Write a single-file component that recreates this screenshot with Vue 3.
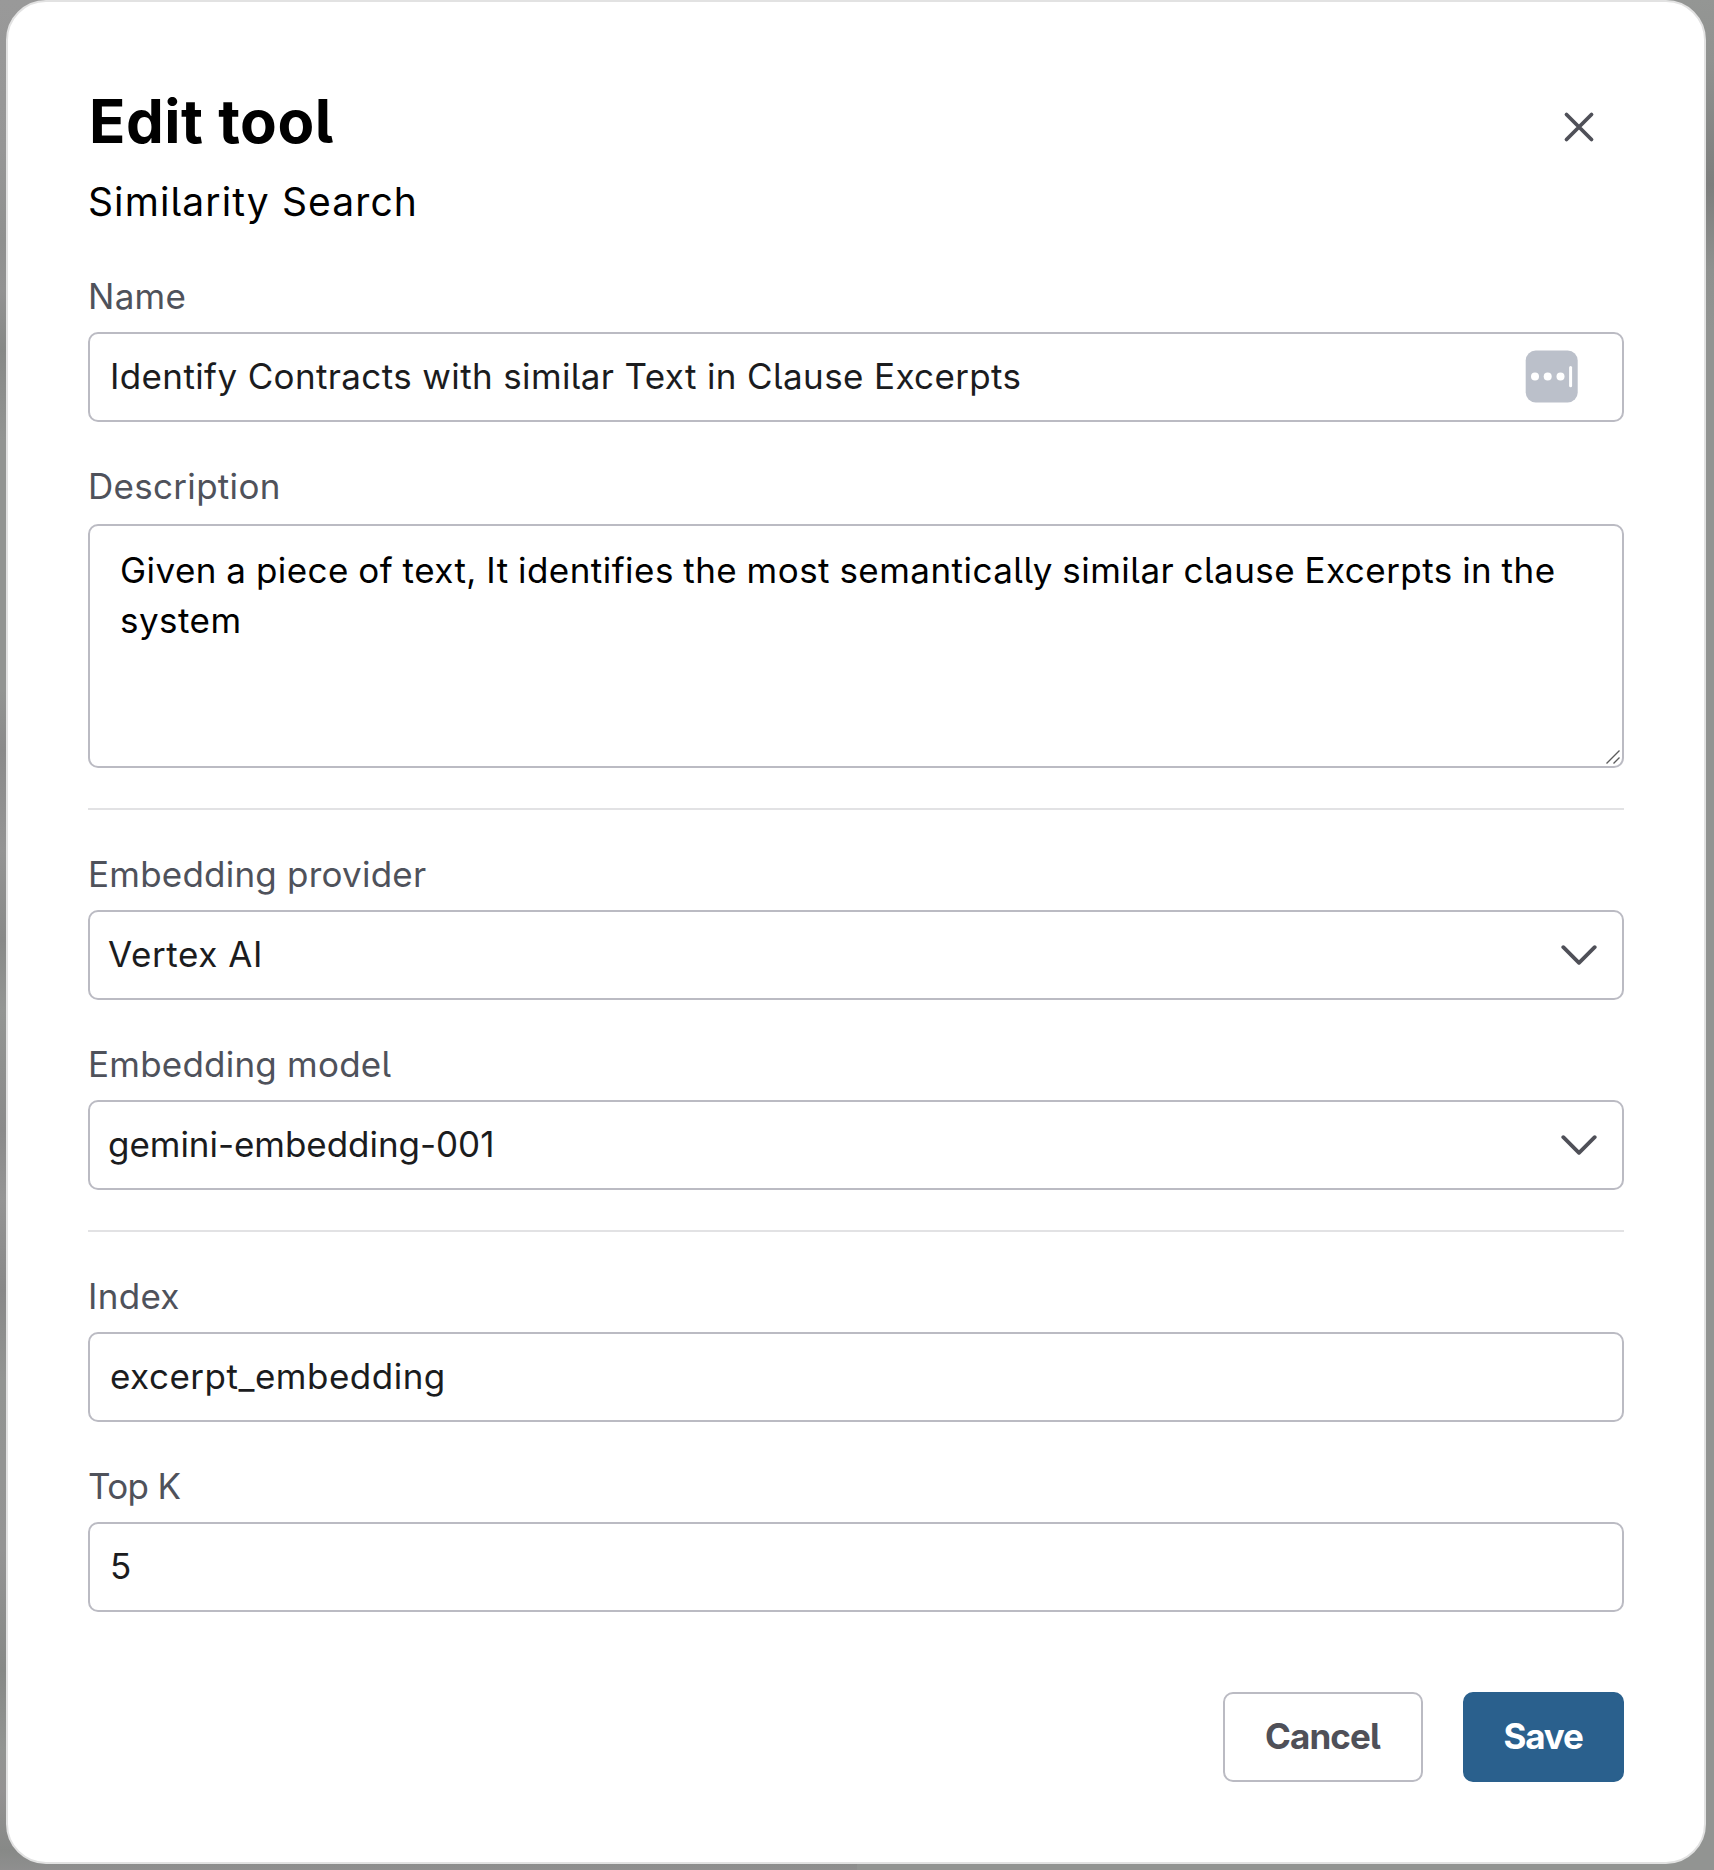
<script setup>
import { ref } from 'vue'

const name = ref('Identify Contracts with similar Text in Clause Excerpts')
const description = ref('Given a piece of text, It identifies the most semantically similar clause Excerpts in the system')
const provider = ref('Vertex AI')
const model = ref('gemini-embedding-001')
const index = ref('excerpt_embedding')
const topK = ref('5')
</script>

<template>
  <div class="backdrop">
    <section class="modal" role="dialog" aria-label="Edit tool">
      <header class="header">
        <div>
          <h1 class="title">Edit tool</h1>
          <p class="subtitle">Similarity Search</p>
        </div>
        <button class="close" aria-label="Close">
          <svg width="32" height="32" viewBox="0 0 32 32">
            <path d="M3.5 3.5 28.5 28.5M28.5 3.5 3.5 28.5" />
          </svg>
        </button>
      </header>

      <div class="form">
        <div class="field">
          <label class="label name-label">Name</label>
          <div class="control">
            <input v-model="name" class="input" type="text" />
            <svg class="autofill" width="54" height="54" viewBox="0 0 54 54">
              <rect x="0.7" y="1.5" width="52" height="52" rx="10" fill="#bbc0ca" />
              <circle cx="10" cy="27.4" r="4" />
              <circle cx="22.7" cy="27.4" r="4" />
              <circle cx="35.5" cy="27.4" r="4" />
              <rect x="44.1" y="17" width="3" height="21.2" rx="1.5" />
            </svg>
          </div>
        </div>

        <div class="field">
          <label class="label description-label">Description</label>
          <div class="control area">
            <textarea v-model="description" class="textarea"></textarea>
            <svg class="grip" width="16" height="16" viewBox="0 0 16 16">
              <path d="M1.5 14.5 14.5 1.5M8.5 14.5 14.5 8.5" />
            </svg>
          </div>
        </div>

        <hr class="divider" />

        <div class="field">
          <label class="label provider-label">Embedding provider</label>
          <div class="control select">
            <span>{{ provider }}</span>
            <svg class="chevron" width="36" height="22" viewBox="0 0 36 22">
              <path d="M2.3 3.2 18 18.8 33.7 3.2" />
            </svg>
          </div>
        </div>

        <div class="field">
          <label class="label provider-label">Embedding model</label>
          <div class="control select model">
            <span>{{ model }}</span>
            <svg class="chevron" width="36" height="22" viewBox="0 0 36 22">
              <path d="M2.3 3.2 18 18.8 33.7 3.2" />
            </svg>
          </div>
        </div>

        <hr class="divider" />

        <div class="field">
          <label class="label">Index</label>
          <div class="control"><input v-model="index" class="input index" type="text" /></div>
        </div>

        <div class="field">
          <label class="label topk-label">Top K</label>
          <div class="control"><input v-model="topK" class="input" type="text" /></div>
        </div>
      </div>

      <footer class="actions">
        <button class="button cancel">Cancel</button>
        <button class="button save">Save</button>
      </footer>
    </section>
  </div>
</template>

<style>
body {
  margin: 0;
}
</style>

<style scoped>
* {
  box-sizing: border-box;
}
.backdrop {
  width: 1714px;
  height: 1870px;
  padding: 0 8px 6px 6px;
  overflow: hidden;
  background:
    linear-gradient(#949694 0, #909290 60px, #7d7e7d 185px, #8f918f 270px, #929492 330px, #929492 100%) right / 50% 100% no-repeat,
    linear-gradient(#999 0, #969696 150px, #8f908f 240px, #929292 290px, #868886 350px, #929492 440px, #929492 690px, #8a8a8a 750px, #949494 850px, #888988 940px, #939593 1010px, #8a8a8a 1130px, #949494 1200px, #888 1290px, #929492 1380px, #949494 1550px, #868886 1670px, #929492 1750px, #949292 1790px, #878987 1850px, #8f8f8f 100%);
  font-family: Inter, "Liberation Sans", sans-serif;
  font-feature-settings: "cv05";
}
.modal {
  height: 1864px;
  padding: 81px 80px 80px;
  border: 2px solid #e2e2e2;
  border-radius: 40px;
  background: #fff;
}
.header {
  display: flex;
  justify-content: space-between;
  height: 188px;
}
.title {
  margin: 0 0 0 1px;
  font-size: 60px;
  line-height: 76px;
  font-weight: 700;
  letter-spacing: 0.5px;
  color: #000;
}
.subtitle {
  margin: 18px 0 0;
  font-size: 39px;
  line-height: 50px;
  letter-spacing: 1.1px;
  color: #000;
}
.close {
  display: flex;
  align-items: center;
  justify-content: center;
  width: 90px;
  height: 88px;
  padding: 0;
  border: 0;
  background: none;
}
.close path,
.chevron path {
  fill: none;
  stroke: #4f5058;
  stroke-width: 3.8;
  stroke-linecap: round;
  stroke-linejoin: round;
}
.form {
  display: flex;
  flex-direction: column;
  gap: 39px;
}
.label {
  display: block;
  height: 50px;
  margin-bottom: 11px;
  font-size: 35px;
  line-height: 50px;
  letter-spacing: 0.3px;
  color: #4f525b;
}
.provider-label {
  letter-spacing: 0.22px;
}
.topk-label {
  letter-spacing: -0.65px;
}
.description-label {
  margin-bottom: 13px;
}
.control {
  position: relative;
  height: 90px;
  border: 2px solid #bbbbc3;
  border-radius: 10px;
  background: #fff;
}
.input {
  display: block;
  width: 100%;
  height: 86px;
  padding: 0 20px 2px;
  border: 0;
  outline: 0;
  background: none;
  font: inherit;
  font-feature-settings: inherit;
  font-size: 35px;
  letter-spacing: 0.37px;
  color: #1b1c1e;
}
.input.index {
  letter-spacing: 0.5px;
}
.autofill {
  position: absolute;
  top: 15px;
  right: 43px;
  fill: #fff;
}
.area {
  height: 244px;
}
.textarea {
  display: block;
  width: 100%;
  height: 240px;
  padding: 19px 26px 20px 30px;
  border: 0;
  outline: 0;
  resize: none;
  background: none;
  font: inherit;
  font-feature-settings: inherit;
  font-size: 35px;
  line-height: 50px;
  letter-spacing: 0.46px;
  word-spacing: -0.9px;
  color: #000;
}
.grip {
  position: absolute;
  right: 1px;
  bottom: 1px;
}
.grip path {
  fill: none;
  stroke: #5c5c5c;
  stroke-width: 1.4;
}
.divider {
  width: 100%;
  height: 2px;
  margin: 1px 0 0;
  border: 0;
  background: #e2e2e4;
}
.select {
  display: flex;
  align-items: center;
  justify-content: space-between;
  padding: 0 25px 0 18px;
  font-size: 35px;
  letter-spacing: 0.58px;
  color: #1b1c1e;
}
.select span {
  padding-bottom: 2px;
}
.select.model {
  letter-spacing: -0.04px;
}
.actions {
  display: flex;
  justify-content: flex-end;
  gap: 40px;
  margin-top: 80px;
}
.button {
  height: 90px;
  padding: 0 1px 2px 0;
  border: 2px solid #bbbbc3;
  border-radius: 10px;
  background: #fff;
  font: inherit;
  font-feature-settings: inherit;
  font-size: 35px;
  font-weight: 700;
  color: #4f5058;
}
.cancel {
  width: 200px;
  letter-spacing: -0.9px;
}
.save {
  width: 161px;
  border-color: #2a608d;
  background: #2a608d;
  letter-spacing: -1.16px;
  color: #fff;
}
</style>
